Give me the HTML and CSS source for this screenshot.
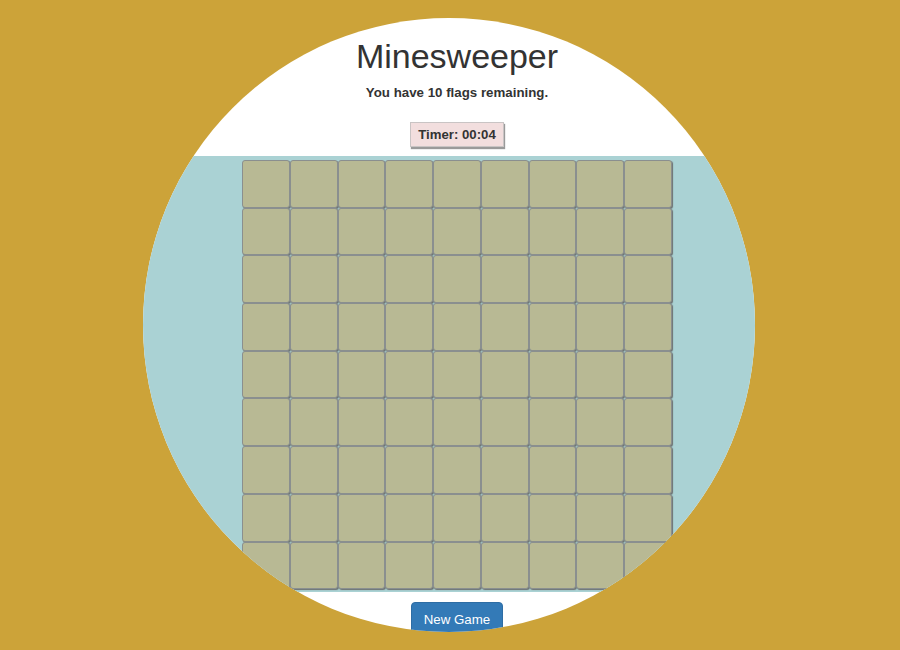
FILE: index.html
```html
<!DOCTYPE html>
<html>
<head>
<meta charset="utf-8">
<link rel="stylesheet" href="styles.css">
</head>
<body>
<div class="circle">
  <div class="content">
    <h1 class="title">Minesweeper</h1>
    <p class="flags">You have 10 flags remaining.</p>
    <div class="timer-row"><span class="timer">Timer: 00:04</span></div>
  </div>
  <div class="band">
    <div class="board">
      <div class="cell"></div><div class="cell"></div><div class="cell"></div><div class="cell"></div><div class="cell"></div><div class="cell"></div><div class="cell"></div><div class="cell"></div><div class="cell"></div>
      <div class="cell"></div><div class="cell"></div><div class="cell"></div><div class="cell"></div><div class="cell"></div><div class="cell"></div><div class="cell"></div><div class="cell"></div><div class="cell"></div>
      <div class="cell"></div><div class="cell"></div><div class="cell"></div><div class="cell"></div><div class="cell"></div><div class="cell"></div><div class="cell"></div><div class="cell"></div><div class="cell"></div>
      <div class="cell"></div><div class="cell"></div><div class="cell"></div><div class="cell"></div><div class="cell"></div><div class="cell"></div><div class="cell"></div><div class="cell"></div><div class="cell"></div>
      <div class="cell"></div><div class="cell"></div><div class="cell"></div><div class="cell"></div><div class="cell"></div><div class="cell"></div><div class="cell"></div><div class="cell"></div><div class="cell"></div>
      <div class="cell"></div><div class="cell"></div><div class="cell"></div><div class="cell"></div><div class="cell"></div><div class="cell"></div><div class="cell"></div><div class="cell"></div><div class="cell"></div>
      <div class="cell"></div><div class="cell"></div><div class="cell"></div><div class="cell"></div><div class="cell"></div><div class="cell"></div><div class="cell"></div><div class="cell"></div><div class="cell"></div>
      <div class="cell"></div><div class="cell"></div><div class="cell"></div><div class="cell"></div><div class="cell"></div><div class="cell"></div><div class="cell"></div><div class="cell"></div><div class="cell"></div>
      <div class="cell"></div><div class="cell"></div><div class="cell"></div><div class="cell"></div><div class="cell"></div><div class="cell"></div><div class="cell"></div><div class="cell"></div><div class="cell"></div>
    </div>
  </div>
  <div class="content footer">
    <button class="new-game">New Game</button>
  </div>
</div>
</body>
</html>
```

FILE: styles.css
```css
html, body {
  margin: 0;
  padding: 0;
  background: #cca339;
  font-family: "Liberation Sans", Arial, sans-serif;
  color: #333;
}
body {
  width: 900px;
  height: 650px;
  overflow: hidden;
  padding-top: 18px;
  box-sizing: border-box;
}
.circle {
  margin-left: 143px;
  width: 612px;
  height: 614px;
  border-radius: 50%;
  overflow: hidden;
  background: #fff;
}
.content {
  padding-left: 16px;
  text-align: center;
}
.title {
  margin: 0;
  padding-top: 19px;
  font-size: 34px;
  font-weight: normal;
  line-height: 38px;
}
.flags {
  margin: 8px 0 0;
  font-size: 13.3px;
  font-weight: bold;
  line-height: 20px;
}
.timer-row {
  padding-top: 19px;
  height: 51px;
  box-sizing: border-box;
}
.timer {
  display: inline-block;
  background: #f2dede;
  border: 1px solid #c9c4c4;
  box-shadow: 1px 2px 1px #9a9a9a;
  padding: 4px 7px 3px;
  font-size: 13.2px;
  font-weight: bold;
  line-height: 16px;
}
.band {
  margin-top: 2px;
  background: #aad2d4;
  padding: 4px 0 3px 16px;
  display: flex;
  justify-content: center;
}
.board {
  display: grid;
  grid-template-columns: repeat(9, 47.7px);
  grid-auto-rows: 47.7px;
}
.cell {
  box-sizing: border-box;
  background: #b8b994;
  border: 1px solid #8a8f8f;
  border-radius: 3px;
  box-shadow: 1px 1px 1px #6c7070;
}
.footer {
  padding-top: 10px;
}
.new-game {
  background: #337ab7;
  color: #fff;
  border: 1px solid #2e6da4;
  border-radius: 4px;
  font-family: "Liberation Sans", Arial, sans-serif;
  font-size: 13.3px;
  line-height: 20px;
  padding: 7px 12px;
}
```
